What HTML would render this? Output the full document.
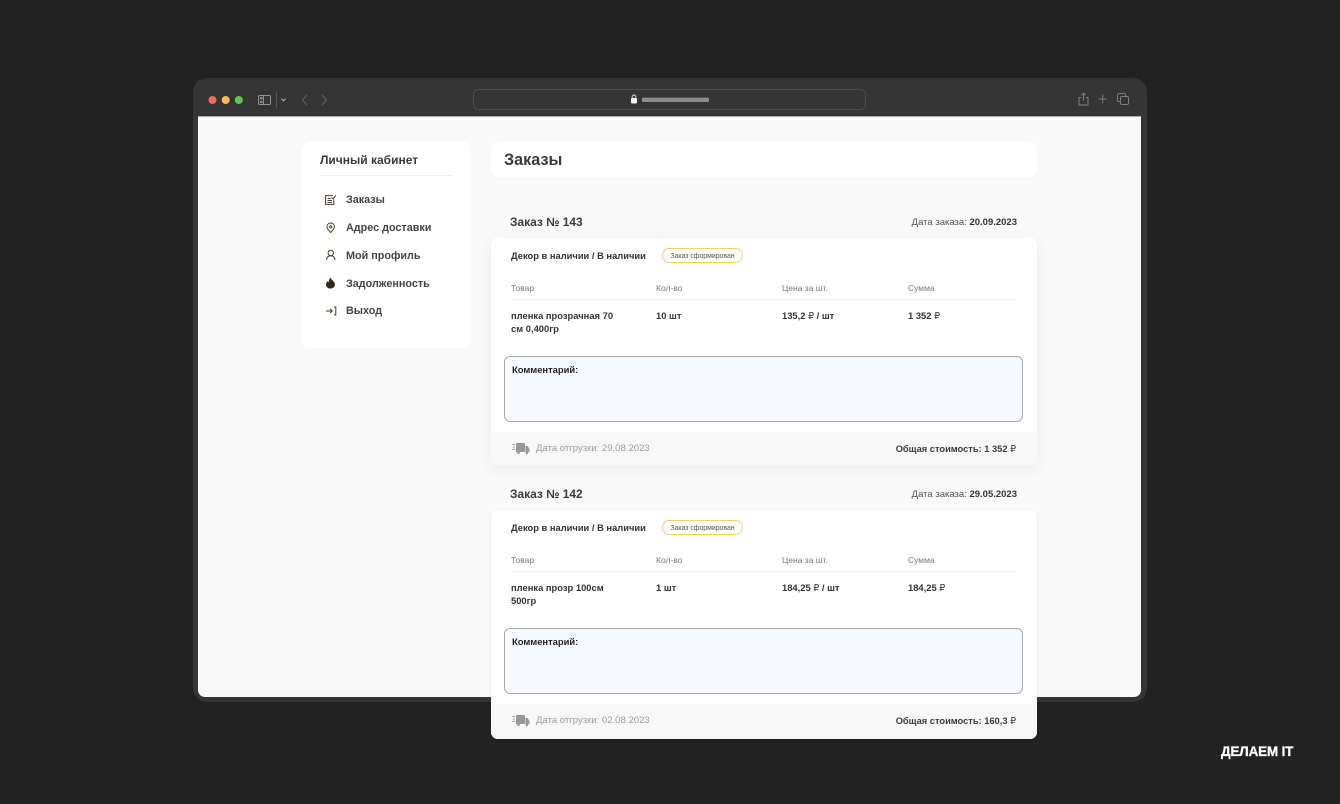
<!DOCTYPE html>
<html lang="ru">
<head>
<meta charset="utf-8">
<title>Заказы</title>
<style>
html,body{margin:0;padding:0;width:1340px;height:804px;overflow:hidden;background:#222222;}
body{position:relative;font-family:"Liberation Sans","DejaVu Sans",sans-serif;color:#2c2c2c;}
.a{position:absolute;white-space:nowrap;line-height:14px;}
.b{font-weight:bold;}
svg{position:absolute;overflow:visible;}
.r{font-weight:normal;}
.win{position:absolute;left:193px;top:78px;width:954px;height:624px;background:#363535;border-radius:14px;}
.content{position:absolute;left:198px;top:116px;width:943px;height:581px;background:#f9f9f9;border-radius:0 0 7px 7px;border-top:1px solid #aaa;box-sizing:border-box;}
.white{position:absolute;background:#fff;}
.t{font-size:8.5px;color:#777;}
.v{font-size:9.4px;font-weight:bold;color:#333;line-height:13px;}
.m{font-size:10.8px;font-weight:bold;color:#444;left:346px;}
.pill{position:absolute;width:79px;height:13px;border:1px solid #fbcf68;border-radius:8px;background:#fff;font-size:6.9px;color:#555;text-align:center;line-height:15px;}
.cm{position:absolute;left:504px;width:519px;height:66px;box-sizing:border-box;background:#f7f9ff;border:1px solid #a8a8ae;border-radius:6px;}
.foot{position:absolute;left:491px;width:546px;background:#f8f8f8;border-radius:0 0 7px 7px;}
</style>
</head>
<body>
<div class="win"></div>
<div class="content"></div>

<!-- toolbar -->
<svg style="left:0;top:0" width="1340" height="116">
<circle cx="212.5" cy="100" r="4" fill="#ec6a5e"/>
<circle cx="225.7" cy="100" r="4" fill="#f4bf4f"/>
<circle cx="238.8" cy="100" r="4" fill="#61c554"/>
<g fill="none" stroke="#8f8f8f" stroke-width="1">
<rect x="258.5" y="95.5" width="12" height="9" rx="1.5"/>
<path d="M263.5 95.5v9"/>
</g>
<rect x="260" y="97" width="2.5" height="2.5" fill="#8f8f8f"/>
<rect x="260" y="101" width="2.5" height="2" fill="#8f8f8f"/>
<path d="M276.5 92v16" stroke="#555" stroke-width="1"/>
<path d="M281.5 98.8l2 2 2-2" fill="none" stroke="#a5a5a5" stroke-width="1.2"/>
<path d="M307 95l-4.5 5 4.5 5" fill="none" stroke="#5f5f5f" stroke-width="1.1"/>
<path d="M322 95l4.5 5-4.5 5" fill="none" stroke="#5f5f5f" stroke-width="1.1"/>
<rect x="473.5" y="89.5" width="392" height="20" rx="5" fill="#363535" stroke="#4b4b4b" stroke-width="1"/>
<rect x="631" y="98" width="6" height="5.5" rx="1" fill="#f2f2f2"/>
<path d="M632.2 98v-1.2a1.8 1.8 0 0 1 3.6 0V98" fill="none" stroke="#e0e0e0" stroke-width=".9"/>
<rect x="642" y="97.6" width="67" height="4.4" rx="1" fill="#8d8d8d"/>
<g fill="none" stroke="#7d7d7d" stroke-width="1">
<path d="M1081 97.500h-2v7.500h9v-7.500h-2"/>
<path d="M1083.500 100.500v-7M1081.500 95.200l2-2 2 2"/>
<path d="M1098.500 99h8.500M1102.700 94.800v8.500"/>
<rect x="1117.500" y="93.500" width="8" height="8" rx="1.500"/>
<rect x="1120.500" y="96.500" width="8" height="8" rx="1.500" fill="#363535"/>
</g>
</svg>

<!-- sidebar -->
<div class="white" style="left:302px;top:142px;width:169px;height:206px;border-radius:8px"></div>
<div class="a b" style="left:320px;top:153px;font-size:12px;color:#3a3a3a">Личный кабинет</div>
<div class="white" style="left:320px;top:175px;width:133px;height:1px;background:#eeeeee"></div>
<div class="a m" style="top:193px">Заказы</div>
<div class="a m" style="top:221px">Адрес доставки</div>
<div class="a m" style="top:249px">Мой профиль</div>
<div class="a m" style="top:277px">Задолженность</div>
<div class="a m" style="top:304px">Выход</div>
<svg style="left:0;top:0" width="1340" height="340">
<g fill="none" stroke="#4a3c30" stroke-width="1">
<path d="M333 195.600h-7.400v8.800h8.200v-5"/>
<path d="M327.500 198.500h3M327.500 200.500h4.500M327.500 202.500h4.500"/>
<path d="M331.500 197.500l1.500 1.400 2.800-3.600"/>
<path d="M330.700 232.500c-2.400-2.500-3.700-4.200-3.700-5.800a3.700 3.700 0 0 1 7.400 0c0 1.600-1.300 3.300-3.700 5.800z"/>
<circle cx="330.700" cy="226.800" r="1.100"/>
<circle cx="330.800" cy="253" r="2.700"/>
<path d="M326.500 260c.4-2.900 2-4.300 4.300-4.300s3.900 1.400 4.300 4.300"/>
<path d="M326 311h6M330 309l2.300 2-2.300 2"/>
<path d="M334 307h1.800v8H334"/>
</g>
<path d="M330.500 277.500c.4 1.600 1.300 2.200 2.400 3.300 1.200 1.200 2 2.300 2 3.800 0 2.300-2 3.900-4.500 3.900s-4.400-1.600-4.400-3.900c0-1.700 1-2.800 1.900-3.500.3.700.6 1 1.100 1.200-.2-2 .4-3.700 1.500-4.800z" fill="#3a2412"/>
</svg>

<!-- title -->
<div class="white" style="left:491px;top:142px;width:546px;height:35px;border-radius:8px"></div>
<div class="a b" style="left:504px;top:151px;font-size:16.200px;line-height:18px;color:#3a3a3a">Заказы</div>

<!-- order 143 -->
<div class="a b" style="left:510px;top:215px;font-size:11.950px;color:#3a3a3a">Заказ № 143</div>
<div class="a" style="right:323px;top:216px;font-size:9.500px;color:#555">Дата заказа: <b style="color:#333">20.09.2023</b></div>
<div class="white" style="left:491px;top:238px;width:546px;height:228px;border-radius:7px;box-shadow:0 4px 16px rgba(0,0,0,.06)"></div>
<div class="a b" style="left:511px;top:249px;font-size:9.350px;color:#333">Декор в наличии / В наличии</div>
<div class="pill" style="left:662px;top:248px">Заказ сформирован</div>
<div class="a t" style="left:511px;top:281px">Товар</div>
<div class="a t" style="left:656px;top:281px">Кол-во</div>
<div class="a t" style="left:782px;top:281px">Цена за шт.</div>
<div class="a t" style="left:908px;top:281px">Сумма</div>
<div class="white" style="left:511px;top:299px;width:505px;height:1px;background:#efefef"></div>
<div class="a v" style="left:511px;top:309px">пленка прозрачная 70<br>см 0,400гр</div>
<div class="a v" style="left:656px;top:309px">10 шт</div>
<div class="a v" style="left:782px;top:309px">135,2 <span class="r">₽</span> / шт</div>
<div class="a v" style="left:908px;top:309px">1 352 <span class="r">₽</span></div>
<div class="cm" style="top:356px"></div>
<div class="a v" style="left:512px;top:363px;color:#222">Комментарий:</div>
<div class="foot" style="top:432px;height:34px"></div>
<svg style="left:0;top:0" width="1340" height="470">
<g fill="#999">
<rect x="516" y="443" width="9" height="9" rx=".8"/>
<path d="M525.500 446h2l2 3v3h-4z"/>
<circle cx="518.500" cy="452.800" r="1.400"/>
<circle cx="526.800" cy="452.800" r="1.400"/>
<rect x="512" y="444" width="3" height=".9"/><rect x="512.800" y="446.500" width="2.200" height=".9"/><rect x="512" y="449" width="3" height=".9"/>
</g>
</svg>
<div class="a" style="left:536px;top:442px;font-size:9.550px;color:#9b9b9b">Дата отгрузки: 29.08.2023</div>
<div class="a b" style="right:324px;top:442px;font-size:9.300px;color:#3a3a3a">Общая стоимость: 1 352 <span class="r">₽</span></div>

<!-- order 142 -->
<div class="a b" style="left:510px;top:487px;font-size:11.950px;color:#3a3a3a">Заказ № 142</div>
<div class="a" style="right:323px;top:488px;font-size:9.500px;color:#555">Дата заказа: <b style="color:#333">29.05.2023</b></div>
<div class="white" style="left:491px;top:510px;width:546px;height:229px;border-radius:7px;box-shadow:0 1px 3px rgba(0,0,0,.06)"></div>
<div class="a b" style="left:511px;top:521px;font-size:9.350px;color:#333">Декор в наличии / В наличии</div>
<div class="pill" style="left:662px;top:520px">Заказ сформирован</div>
<div class="a t" style="left:511px;top:553px">Товар</div>
<div class="a t" style="left:656px;top:553px">Кол-во</div>
<div class="a t" style="left:782px;top:553px">Цена за шт.</div>
<div class="a t" style="left:908px;top:553px">Сумма</div>
<div class="white" style="left:511px;top:571px;width:505px;height:1px;background:#efefef"></div>
<div class="a v" style="left:511px;top:581px">пленка прозр 100см<br>500гр</div>
<div class="a v" style="left:656px;top:581px">1 шт</div>
<div class="a v" style="left:782px;top:581px">184,25 <span class="r">₽</span> / шт</div>
<div class="a v" style="left:908px;top:581px">184,25 <span class="r">₽</span></div>
<div class="cm" style="top:628px"></div>
<div class="a v" style="left:512px;top:635px;color:#222">Комментарий:</div>
<div class="foot" style="top:704px;height:35px"></div>
<svg style="left:0;top:0" width="1340" height="740">
<g fill="#999">
<rect x="516" y="715" width="9" height="9" rx=".8"/>
<path d="M525.500 718h2l2 3v3h-4z"/>
<circle cx="518.500" cy="724.800" r="1.400"/>
<circle cx="526.800" cy="724.800" r="1.400"/>
<rect x="512" y="716" width="3" height=".9"/><rect x="512.800" y="718.500" width="2.200" height=".9"/><rect x="512" y="721" width="3" height=".9"/>
</g>
</svg>
<div class="a" style="left:536px;top:714px;font-size:9.550px;color:#9b9b9b">Дата отгрузки: 02.08.2023</div>
<div class="a b" style="right:324px;top:714px;font-size:9.300px;color:#3a3a3a">Общая стоимость: 160,3 <span class="r">₽</span></div>

<!-- logo -->
<div class="a b" style="left:1221px;top:745px;font-size:13.400px;color:#fff;letter-spacing:-.1px;-webkit-text-stroke:.3px #fff">ДЕЛАЕМ IT</div>
</body>
</html>
